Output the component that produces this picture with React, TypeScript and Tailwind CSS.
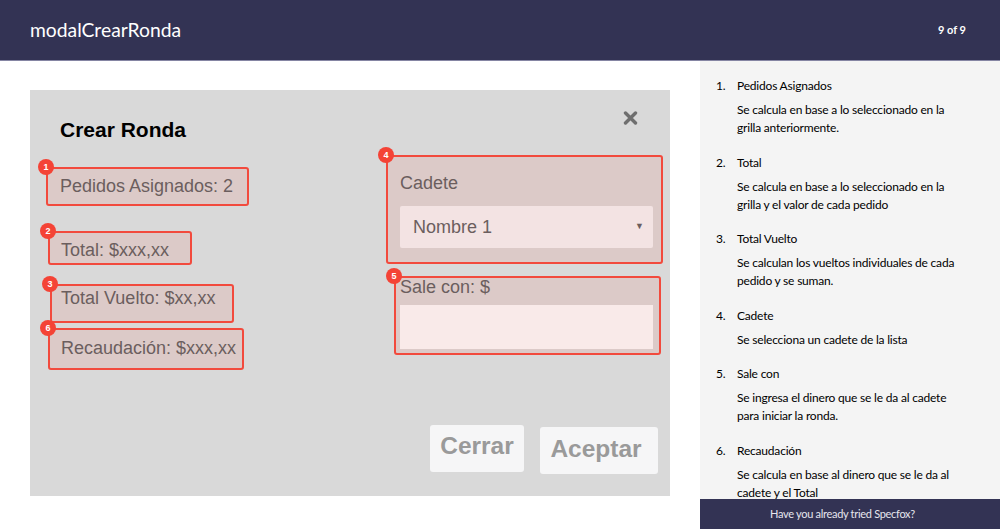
import React from "react";

const notes = [
  { n: 1, title: "Pedidos Asignados", desc: ["Se calcula en base a lo seleccionado en la", "grilla anteriormente."] },
  { n: 2, title: "Total", desc: ["Se calcula en base a lo seleccionado en la", "grilla y el valor de cada pedido"] },
  { n: 3, title: "Total Vuelto", desc: ["Se calculan los vueltos individuales de cada", "pedido y se suman."] },
  { n: 4, title: "Cadete", desc: ["Se selecciona un cadete de la lista"] },
  { n: 5, title: "Sale con", desc: ["Se ingresa el dinero que se le da al cadete", "para iniciar la ronda."] },
  { n: 6, title: "Recaudación", desc: ["Se calcula en base al dinero que se le da al", "cadete y el Total"] },
];

function Badge({ n }: { n: number }) {
  return (
    <span className="absolute -left-[10px] -top-[10px] flex h-[16px] w-[16px] items-center justify-center rounded-full bg-[#f44336] text-[9px] font-bold leading-none text-white">
      {n}
    </span>
  );
}

// caja de anotación (borde rojo + número)
function Spot({
  n,
  className,
  children,
}: {
  n: number;
  className: string;
  children: React.ReactNode;
}) {
  return (
    <div
      className={
        "relative rounded-[3px] border-2 border-[#f24a3d] bg-[#dccac8] " + className
      }
    >
      <Badge n={n} />
      {children}
    </div>
  );
}

export default function App() {
  const arial = { fontFamily: '"Liberation Sans", Arial, sans-serif' };
  const side = { fontFamily: 'Lato, "Open Sans", sans-serif' };

  return (
    <div className="flex h-[529px] w-[1000px] flex-col overflow-hidden bg-white">
      {/* header */}
      <header
        className="flex h-[61px] shrink-0 items-center justify-between border-b border-[#8585a3] bg-[#333354] pl-[30px] pr-[34px] text-white"
        style={side}
      >
        <span className="text-[19.3px] leading-none">modalCrearRonda</span>
        <span className="text-[11px] font-bold">9 of 9</span>
      </header>

      <div className="flex min-h-0 flex-1">
        {/* mockup */}
        <div className="w-[700px] pl-[30px] pt-[29px]">
          <div className="flex h-[406px] w-[640px] bg-[#d9d9d9] text-[#6b5e5e]" style={arial}>
            <div className="flex w-[356px] flex-col pt-[28px]">
              <h2 className="ml-[30px] text-[21px] font-bold leading-[24px] text-black">
                Crear Ronda
              </h2>
              <Spot n={1} className="ml-[16px] mt-[25px] h-[39px] w-[203px] pl-[12px] pt-[7px]">
                <p className="text-[18px] leading-[20px]">Pedidos Asignados: 2</p>
              </Spot>
              <Spot n={2} className="ml-[18px] mt-[25px] h-[34px] w-[144px] pl-[11px] pt-[7px]">
                <p className="text-[18px] leading-[20px]">Total: $xxx,xx</p>
              </Spot>
              <Spot n={3} className="ml-[20px] mt-[19px] h-[39px] w-[184px] pl-[9px] pt-[2px]">
                <p className="text-[18px] leading-[20px]">Total Vuelto: $xx,xx</p>
              </Spot>
              <Spot n={6} className="ml-[18px] mt-[5px] h-[42px] w-[196px] pl-[11px] pt-[8px]">
                <p className="text-[18px] leading-[20px]">Recaudación: $xxx,xx</p>
              </Spot>
            </div>

            <div className="flex flex-1 flex-col">
              <div className="flex justify-end pr-[32px] pt-[21px]">
                <svg width="15" height="14" viewBox="0 0 15 14" className="block">
                  <path d="M2.5 2 L12.5 12 M12.5 2 L2.5 12" stroke="#6f6f6f" strokeWidth="3.4" strokeLinecap="round" />
                </svg>
              </div>

              <Spot n={4} className="mt-[30px] h-[109px] w-[277px] pl-[12px] pt-[16px]">
                <p className="text-[18px] leading-[20px]">Cadete</p>
                <div className="mt-[13px] flex h-[42px] w-[253px] items-center justify-between rounded-[2px] bg-[#f3e3e3] pl-[13px] pr-[9px]">
                  <span className="text-[18px]">Nombre 1</span>
                  <span className="text-[9px]">▼</span>
                </div>
              </Spot>

              <Spot n={5} className="ml-[8px] mt-[12px] h-[79px] w-[267px] pl-[4px] pt-[0px]">
                <p className="-mt-[1px] text-[18px] leading-[20px]">Sale con: $</p>
                <div className="mt-[8px] h-[44px] w-[253px] bg-[#f9eae9]" />
              </Spot>

              <div className="ml-[44px] mt-[70px] flex items-start gap-[16px]">
                <button className="flex h-[47px] w-[94px] items-center justify-center rounded-[3px] bg-[#f6f6f7] pb-[5px] text-[24.5px] font-bold text-[#9a9a9a]">
                  Cerrar
                </button>
                <button className="mt-[2px] flex h-[47px] w-[118px] items-center justify-center rounded-[3px] bg-[#f6f6f7] pb-[3px] pr-[6px] text-[24.5px] font-bold text-[#9a9a9a]">
                  Aceptar
                </button>
              </div>
            </div>
          </div>
        </div>

        {/* notas */}
        <aside className="relative flex w-[300px] flex-col overflow-hidden bg-[#f4f4f4]" style={side}>
          <ol className="flex-1 overflow-hidden pl-[16px] pt-[16px] text-[12px] tracking-[-0.2px] text-black">
            {notes.map((it) => (
              <li key={it.n} className="pb-[16.6px]">
                <div className="flex leading-[18px]">
                  <span className="w-[21px]">{it.n}.</span>
                  <span>{it.title}</span>
                </div>
                <div className="mt-[6px] pl-[21px] leading-[18px]">
                  {it.desc.map((d) => (
                    <div key={d}>{d}</div>
                  ))}
                </div>
              </li>
            ))}
          </ol>
          <div className="flex h-[30px] shrink-0 items-center justify-center bg-[#333354] pr-[15px] text-[11px] tracking-[-0.3px] text-[#e6e6ee]">
            Have you already tried Specfox?
          </div>
        </aside>
      </div>
    </div>
  );
}
